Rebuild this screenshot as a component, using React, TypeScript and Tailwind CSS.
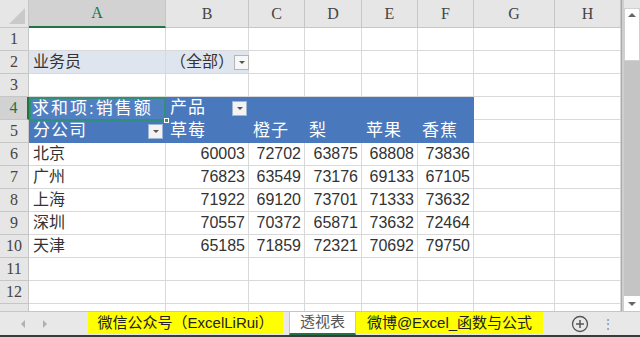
import React from "react";

const cols = ["A", "B", "C", "D", "E", "F", "G", "H"];
const widths = "grid-cols-[29px_137px_83px_56px_57px_56px_56px_81px_66px]";

const data: [string, number[]][] = [
  ["北京", [60003, 72702, 63875, 68808, 73836]],
  ["广州", [76823, 63549, 73176, 69133, 67105]],
  ["上海", [71922, 69120, 73701, 71333, 73632]],
  ["深圳", [70557, 70372, 65871, 73632, 72464]],
  ["天津", [65185, 71859, 72321, 70692, 79750]],
];

const font = "font-['Liberation_Sans','Noto_Sans_CJK_SC',sans-serif]";

const Drop = ({ dark }: { dark?: boolean }) => (
  <span
    className={`flex h-[15px] w-[15px] shrink-0 items-center justify-center border ${
      dark ? "border-[#9fb5d6] bg-[#f3f3f3]" : "border-[#b5b5b5] bg-[#f7f7f7]"
    }`}
  >
    <span className="h-0 w-0 border-x-[3px] border-t-[3px] border-x-transparent border-t-[#555]" />
  </span>
);

const Cell = ({
  children,
  className = "",
}: {
  children?: React.ReactNode;
  className?: string;
}) => (
  <div
    className={`flex h-[23px] items-center overflow-visible whitespace-nowrap border-b border-r border-[#d9d9d9] px-[4px] text-[16px] text-[#333] ${className}`}
  >
    {children}
  </div>
);

const RowHead = ({ n, active }: { n: number; active?: boolean }) => (
  <div
    className={`flex h-[23px] items-center justify-center border-b border-r font-['Liberation_Serif',serif] text-[16px] ${
      active
        ? "border-r-2 border-b-[#c6c6c6] border-r-[#217346] bg-[#d2d2d2] text-[#217346]"
        : "border-[#c6c6c6] bg-[#e6e6e6] text-[#444]"
    }`}
  >
    {n}
  </div>
);

const blue = "bg-[#4a78bd] text-white !border-[#4a78bd]";
const head = "text-[17px] tracking-[1px] text-white";

export default function App() {
  const rows: React.ReactNode[] = [];

  rows.push(
    <React.Fragment key="r1">
      <RowHead n={1} />
      {cols.map((c) => (
        <Cell key={c} />
      ))}
    </React.Fragment>
  );
  rows.push(
    <React.Fragment key="r2">
      <RowHead n={2} />
      <Cell className="bg-[#dfe5ef]">业务员</Cell>
      <Cell className="justify-between bg-[#dfe5ef] pr-[1px]">
        <span>（全部）</span>
        <Drop />
      </Cell>
      {cols.slice(2).map((c) => (
        <Cell key={c} />
      ))}
    </React.Fragment>
  );
  rows.push(
    <React.Fragment key="r3">
      <RowHead n={3} />
      {cols.map((c) => (
        <Cell key={c} />
      ))}
    </React.Fragment>
  );
  rows.push(
    <React.Fragment key="r4">
      <RowHead n={4} active />
      <div className="relative flex h-[23px] items-center bg-[#4a78bd]">
        <div className="absolute inset-0 -bottom-px border-2 border-[#2f8f7a] bg-[#5180c2]" />
        <span className={`relative whitespace-nowrap px-[3px] ${head} tracking-[2px]`}>求和项:销售额</span>
        <span className="absolute -bottom-[3px] -right-[3px] h-[5px] w-[5px] border border-white bg-[#2f8f7a]" />
      </div>
      <Cell className={`${blue} justify-between pr-[1px]`}>
        <span className={head}>产品</span>
        <Drop dark />
      </Cell>
      <Cell className={blue} />
      <Cell className={blue} />
      <Cell className={blue} />
      <Cell className={blue} />
      <Cell />
      <Cell />
    </React.Fragment>
  );
  rows.push(
    <React.Fragment key="r5">
      <RowHead n={5} />
      <Cell className={`${blue} justify-between pr-[2px]`}>
        <span className={head}>分公司</span>
        <Drop dark />
      </Cell>
      {["草莓", "橙子", "梨", "苹果", "香蕉"].map((p) => (
        <Cell key={p} className={blue}>
          <span className={head}>{p}</span>
        </Cell>
      ))}
      <Cell />
      <Cell />
    </React.Fragment>
  );
  data.forEach(([city, nums], i) => {
    rows.push(
      <React.Fragment key={city}>
        <RowHead n={6 + i} />
        <Cell>{city}</Cell>
        {nums.map((v, j) => (
          <Cell key={j} className="justify-end pr-[3px]">
            {v}
          </Cell>
        ))}
        <Cell />
        <Cell />
      </React.Fragment>
    );
  });
  [11, 12].forEach((n) => {
    rows.push(
      <React.Fragment key={n}>
        <RowHead n={n} />
        {cols.map((c) => (
          <Cell key={c} />
        ))}
      </React.Fragment>
    );
  });
  rows.push(
    <React.Fragment key="r13">
      <div className="h-[23px] border-r border-[#c6c6c6] bg-[#e6e6e6]" />
      {cols.map((c) => (
        <Cell key={c} />
      ))}
    </React.Fragment>
  );

  return (
    <div className={`flex h-[337px] w-[640px] flex-col overflow-hidden bg-white ${font}`}>
      <div className="flex h-[311px] overflow-hidden">
        <div className={`grid h-fit w-[621px] ${widths} content-start`}>
          <div className="relative h-[28px] border-b border-r border-[#c6c6c6] bg-[#e6e6e6]">
            <span className="absolute bottom-[3px] right-[3px] h-0 w-0 border-b-[16px] border-l-[16px] border-b-[#c9c9c9] border-l-transparent" />
          </div>
          {cols.map((c) => (
            <div
              key={c}
              className={`flex h-[28px] items-center justify-center border-r font-['Liberation_Serif',serif] text-[16px] ${
                c === "A"
                  ? "border-b-2 border-b-[#217346] border-r-[#c6c6c6] bg-[#d2d2d2] text-[#217346]"
                  : "border-b border-[#c6c6c6] bg-[#e6e6e6] text-[#444]"
              }`}
            >
              {c}
            </div>
          ))}
          {rows}
        </div>
        <div className="w-[3px] border-l border-[#a9a9a9] bg-[#cfcfcf]" />
        <div className="flex w-[16px] flex-col bg-[#c4c4c4]">
          <div className="h-[8px] bg-[#e6e6e6]" />
          <div className="flex h-[53px] flex-col items-center border border-[#d0d0d0] bg-white pt-[4px]">
            <span className="h-0 w-0 border-x-[4px] border-b-[4px] border-x-transparent border-b-[#666]" />
          </div>
          <div className="flex-1" />
          <div className="flex h-[15px] items-center justify-center bg-white">
            <span className="h-0 w-0 border-x-[4px] border-t-[4px] border-x-transparent border-t-[#666]" />
          </div>
        </div>
      </div>

      <div className="flex h-[26px] items-start border-t border-b-2 border-[#c6c6c6] border-b-[#3a3a3a] bg-[#e8e8e8]">
        <div className="flex h-[23px] w-[88px] items-center gap-[18px] pl-[21px]">
          <span className="h-0 w-0 border-y-[4px] border-r-[4px] border-y-transparent border-r-[#b0b0b0]" />
          <span className="h-0 w-0 border-y-[4px] border-l-[4px] border-y-transparent border-l-[#b0b0b0]" />
        </div>
        <div className="flex h-[22px] w-[195px] items-center justify-center bg-[#ffff00] text-[15px] text-[#222]">
          微信公众号（ExcelLiRui）
        </div>
        <div className="w-[6px]" />
        <div className="flex h-[23px] w-[67px] items-center justify-center border-x border-b-2 border-x-[#c6c6c6] border-b-[#217346] bg-white text-[15px] text-[#555]">
          透视表
        </div>
        <div className="flex h-[22px] w-[187px] items-center justify-center bg-[#ffff00] text-[15px] text-[#222]">
          微博@Excel_函数与公式
        </div>
        <div className="flex h-[23px] flex-1 items-center pl-[28px]">
          <svg width="18" height="18" viewBox="0 0 18 18">
            <circle cx="9" cy="9" r="7.5" fill="none" stroke="#555" strokeWidth="1.3" />
            <path d="M9 5v8M5 9h8" stroke="#555" strokeWidth="1.5" />
          </svg>
          <span className="ml-[13px] text-[12px] leading-none text-[#888]">⋮</span>
        </div>
      </div>
    </div>
  );
}
